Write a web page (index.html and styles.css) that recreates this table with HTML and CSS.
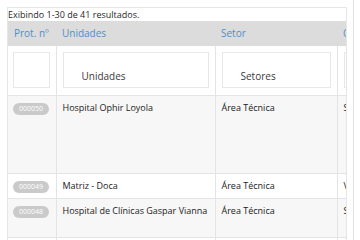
FILE: index.html
```html
<!DOCTYPE html>
<html lang="pt-BR">
<head>
    <meta charset="UTF-8">
    <meta name="viewport" content="width=device-width, initial-scale=1.0">
    <title>Protocolos | Unidades</title>
    <link rel="stylesheet" href="styles.css">
</head>
<body>
    <div class="page">
        <div class="grid-view">
            <div class="summary">Exibindo 1-30 de 41 resultados.</div>

            <div class="table-wrap">
                <table class="items">
                    <colgroup>
                        <col class="col-prot">
                        <col class="col-unit">
                        <col class="col-sector">
                        <col class="col-extra">
                    </colgroup>
                    <thead>
                        <tr class="head">
                            <th><a href="#">Prot. nº</a></th>
                            <th><a href="#">Unidades</a></th>
                            <th><a href="#">Setor</a></th>
                            <th><a href="#">Cadastro</a></th>
                        </tr>
                        <tr class="filters">
                            <td><input type="text"></td>
                            <td><input type="text" placeholder="Unidades"></td>
                            <td><input type="text" placeholder="Setores"></td>
                            <td><input type="text"></td>
                        </tr>
                    </thead>
                    <tbody>
                        <tr class="odd tall">
                            <td><span class="badge">000050</span></td>
                            <td>Hospital Ophir Loyola</td>
                            <td>Área Técnica</td>
                            <td>Solicitação de manutenção</td>
                        </tr>
                        <tr class="even">
                            <td><span class="badge">000049</span></td>
                            <td>Matriz - Doca</td>
                            <td>Área Técnica</td>
                            <td>Vistoria</td>
                        </tr>
                        <tr class="odd mid">
                            <td><span class="badge">000048</span></td>
                            <td>Hospital de Clínicas Gaspar Vianna</td>
                            <td>Área Técnica</td>
                            <td>Solicitação</td>
                        </tr>
                        <tr class="even">
                            <td><span class="badge">000047</span></td>
                            <td>Matriz - Doca</td>
                            <td>Área Técnica</td>
                            <td>Vistoria</td>
                        </tr>
                    </tbody>
                </table>
            </div>
        </div>
    </div>
</body>
</html>
```

FILE: styles.css
```css
* {
    box-sizing: border-box;
    margin: 0;
    padding: 0;
}

body {
    font-family: 'Open Sans', 'Noto Sans', sans-serif;
    font-size: 9px;
    color: #2b2b2b;
    background: #fff;
    overflow: hidden;
}

.page {
    width: 354px;
    height: 240px;
    padding: 7px 0 0 7px;
    border-right: 1px solid #e2e2e2;
}

.grid-view {
    width: 340px;
    border: 1px solid #e6e6e6;
    border-bottom: none;
}

.summary {
    line-height: 13px;
    color: #1f1f1f;
}

.table-wrap {
    overflow: hidden;
}

.items {
    border-collapse: collapse;
    table-layout: fixed;
    width: 480px;
}

.col-prot { width: 48px; }
.col-unit { width: 159px; }
.col-sector { width: 122px; }
.col-extra { width: 151px; }

.head th {
    background: #dcdcdc;
    text-align: left;
    font-weight: 400;
    font-size: 10px;
    line-height: 15px;
    padding: 5px 6px;
}

.head th a {
    color: #4f8fcb;
    text-decoration: none;
}

.filters td {
    padding: 6px 6px 7px;
    border-right: 1px solid #e4e4e4;
    background: #fff;
}

.filters td:first-child {
    padding-left: 5px;
}

.filters input {
    display: block;
    width: 100%;
    height: 36px;
    border: 1px solid #e8e8e8;
    padding: 12px 0 0 18px;
    font-family: inherit;
    font-size: 10px;
    color: #333;
    background: #fff;
    outline: none;
}

.filters input::placeholder {
    color: #3a3a3a;
    opacity: 1;
}

tbody td {
    border-top: 1px solid #e4e4e4;
    border-right: 1px solid #e4e4e4;
    padding: 5px 6px;
    line-height: 14px;
    font-weight: 500;
    color: #222;
    vertical-align: top;
    white-space: nowrap;
    overflow: hidden;
}

tbody td:first-child {
    padding-left: 5px;
}

tbody tr.odd td { background: #f7f7f7; }
tbody tr.even td { background: #fff; }

tbody tr.tall td { height: 78px; }
tbody tr.mid td { height: 39px; }

.badge {
    display: inline-block;
    width: 36px;
    height: 12px;
    margin-top: 2px;
    border-radius: 6px;
    background: #cacaca;
    color: #fff;
    font-size: 7px;
    font-weight: 400;
    line-height: 12px;
    text-align: center;
    vertical-align: top;
}
```
